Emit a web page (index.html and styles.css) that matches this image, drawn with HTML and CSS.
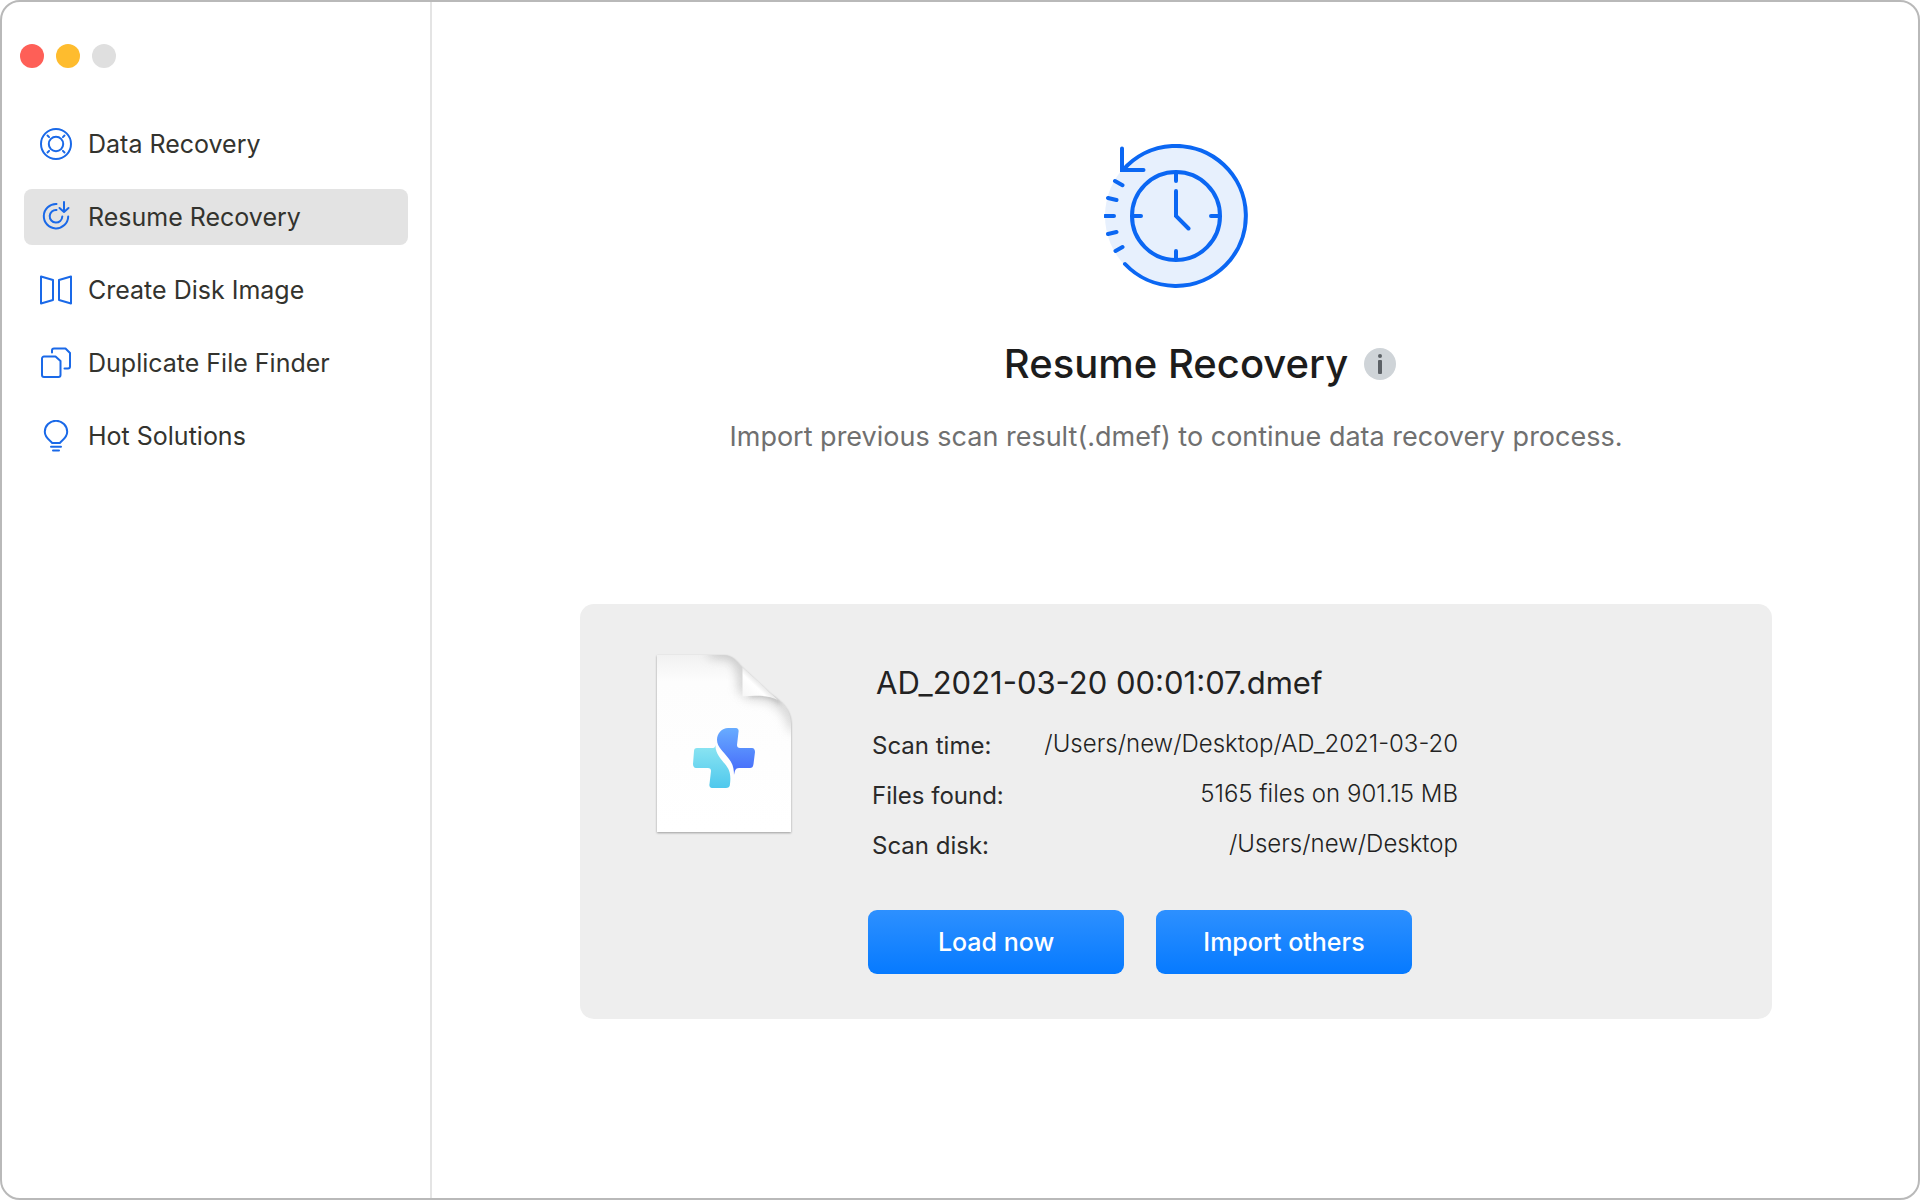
FILE: index.html
```html
<!DOCTYPE html>
<html lang="en">
<head>
<meta charset="utf-8">
<meta name="viewport" content="width=device-width, initial-scale=1">
<title>Resume Recovery</title>
<link rel="stylesheet" href="styles.css">
</head>
<body>
<div class="window">
  <aside class="sidebar">
    <div class="controls">
      <button class="dot dot-close" type="button" aria-label="Close"></button>
      <button class="dot dot-minimize" type="button" aria-label="Minimize"></button>
      <button class="dot dot-zoom" type="button" aria-label="Zoom" disabled></button>
    </div>
    <nav class="nav">
      <a class="nav-item" href="#data">
        <svg class="nav-icon" viewBox="0 0 32 32" aria-hidden="true"><circle cx="16" cy="16" r="15"/><circle cx="16" cy="16" r="7.2"/><path d="M7.500 7.500l1.600 1.600M24.500 7.500l-1.600 1.600M7.500 24.500l1.600-1.600M24.500 24.500l-1.600-1.600"/></svg>
        <span>Data Recovery</span>
      </a>
      <a class="nav-item active" href="#resume" aria-current="page">
        <svg class="nav-icon" viewBox="0 0 32 32" aria-hidden="true"><path d="M16.500 3A12.200 12.200 0 1 0 28.200 15.500"/><path d="M16.500 9A6.300 6.300 0 1 0 22.300 15.500"/><path d="M24 1V10.500M19.500 7l4.500 4 4.500-4"/></svg>
        <span>Resume Recovery</span>
      </a>
      <a class="nav-item" href="#image">
        <svg class="nav-icon" viewBox="0 0 32 32" aria-hidden="true"><path d="M1 2.500L13 6V26L1 29.500ZM31 2.500L19 6V26L31 29.500Z"/></svg>
        <span>Create Disk Image</span>
      </a>
      <a class="nav-item" href="#duplicates">
        <svg class="nav-icon" viewBox="0 0 32 32" aria-hidden="true"><path d="M4 9.500h11.500L20.500 14V28a2 2 0 0 1-2 2H4a2 2 0 0 1-2-2V11.500a2 2 0 0 1 2-2Z"/><path d="M12 5.500V3.500a2 2 0 0 1 2-2H25.500l4.500 4.500V19.500a2 2 0 0 1-2 2H24.500"/></svg>
        <span>Duplicate File Finder</span>
      </a>
      <a class="nav-item" href="#solutions">
        <svg class="nav-icon" viewBox="0 0 32 32" aria-hidden="true"><path d="M12 23C11.500 21 4.800 18.500 4.800 11.800a11.200 11 0 0 1 22.400 0C27.200 18.500 20.500 21 20 23Z"/><path d="M11 26.800H21M13 30.500H19"/></svg>
        <span>Hot Solutions</span>
      </a>
    </nav>
  </aside>
  <main class="main">
    <header class="hero">
      <svg class="hero-icon" viewBox="0 0 144 144" aria-hidden="true">
        <circle class="hero-disc" cx="72" cy="72" r="71"/>
        <path d="M19 26A70 70 0 1 1 21 120"/>
        <path d="M18 4.500V26H39.500"/>
        <circle cx="72" cy="72" r="44"/>
        <path d="M72 30v7M72 107v7M30 72h7M107 72h7M72 47V72L84.500 84.500"/>
        <path d="M11 37l7.500 4.200M4 54l8.500 2M1 72h9M4 90l8.500-2M11.500 107l7-4"/>
      </svg>
      <div class="title-row">
        <h1 class="title">Resume Recovery</h1>
        <button class="info" type="button" aria-label="About this feature">
          <svg class="info-icon" viewBox="0 0 32 32" aria-hidden="true"><circle cx="16" cy="8" r="2"/><rect x="14" y="12" width="4" height="14" rx="1"/></svg>
        </button>
      </div>
      <p class="subtitle">Import previous scan result(.dmef) to continue data recovery process.</p>
    </header>
    <section class="card">
      <svg class="file-icon" viewBox="30 18 148 192" aria-hidden="true">
        <defs>
          <linearGradient id="paper" x1="0" y1="0" x2="0" y2="1"><stop offset="0" stop-color="#f1f1f1"/><stop offset=".15" stop-color="#fdfdfd"/><stop offset="1" stop-color="#fff"/></linearGradient>
          <linearGradient id="flap" gradientUnits="userSpaceOnUse" x1="124" y1="68" x2="140" y2="51"><stop offset="0" stop-color="#f6f6f6"/><stop offset=".7" stop-color="#fff"/><stop offset="1" stop-color="#e2e2e2"/></linearGradient>
          <linearGradient id="cyan" x1="0" y1="0" x2="0" y2="1"><stop offset="0" stop-color="#8ce5f2"/><stop offset="1" stop-color="#4fc8ed"/></linearGradient>
          <linearGradient id="blue" x1="0" y1="0" x2="0" y2="1"><stop offset="0" stop-color="#68acff"/><stop offset="1" stop-color="#4468fa"/></linearGradient>
          <clipPath id="sheet-clip"><path d="M37 25H104C112 25 116 30 121 36L150 63C163 72 171 80 171 94V202H37Z"/></clipPath>
          <filter id="soft" x="-50%" y="-50%" width="200%" height="200%"><feGaussianBlur stdDeviation="6"/></filter>
          <filter id="tight" x="-50%" y="-50%" width="200%" height="200%"><feGaussianBlur stdDeviation="2"/></filter>
        </defs>
        <path class="sheet" fill="url(#paper)" d="M37 25H104C112 25 116 30 121 36L150 63C163 72 171 80 171 94V202H37Z"/>
        <g clip-path="url(#sheet-clip)" fill="none" stroke="#8a8a8a">
          <path filter="url(#soft)" stroke-width="9" opacity=".55" d="M90 22H104C116 22 122 33 124 45V62"/>
          <path filter="url(#soft)" stroke-width="8" opacity=".5" d="M126 64C145 62 156 67 164 76C172 85 174 90 174 100"/>
          <path filter="url(#tight)" stroke-width="3" opacity=".5" d="M130 65C147 64 155 67 160 73"/>
          <path fill="url(#flap)" stroke="none" d="M122.500 37L158 70C148 65 135 65 122.500 66.500Z"/>
        </g>
        <path fill="url(#cyan)" d="M77 118H93C95 118 95 116 95.500 115C95 123 101 129 105 134C110 140 111 145 110 154C110 157 108 158 106 158H92C90 158 89 156 89.500 154L91 141C91 139 90 138 88 138H76C74 138 73 136 73 134L74 121C74 119 75 118 77 118Z"/>
        <path fill="url(#blue)" d="M108 98H116C118 98 119 100 118.500 102L117 115C117 117 118 118 120 118H132C134 118 135 120 135 122L133.500 134C133 137 132 138 130 138H119C115 138 115 141 114 145C114 139 113 134 109 129C104 122 97 117 97 110C97 103 102 98 108 98Z"/>
      </svg>
      <div class="details">
        <h2 class="file-name">AD_2021-03-20 00:01:07.dmef</h2>
        <dl class="facts">
          <div class="fact"><dt>Scan time:</dt><dd>/Users/new/Desktop/AD_2021-03-20</dd></div>
          <div class="fact"><dt>Files found:</dt><dd>5165 files on 901.15 MB</dd></div>
          <div class="fact"><dt>Scan disk:</dt><dd>/Users/new/Desktop</dd></div>
        </dl>
        <div class="actions">
          <button class="action" type="button">Load now</button>
          <button class="action" type="button">Import others</button>
        </div>
      </div>
    </section>
  </main>
</div>
</body>
</html>
```
FILE: styles.css
```css
* {
  box-sizing: border-box;
}

body {
  margin: 0;
  background: #fff;
  font-family: Inter, "Liberation Sans", sans-serif;
}

h1, h2, p, dl, dd {
  margin: 0;
}

button {
  padding: 0;
  border: 0;
  font-family: inherit;
}

.window {
  display: flex;
  min-height: 100vh;
  overflow: hidden;
  border: 2px solid #b9b9b9;
  border-radius: 20px;
  background: #fff;
}

.sidebar {
  flex: 0 0 430px;
  padding: 42px 22px;
  border-right: 2px solid #e4e4e4;
}

.controls {
  display: flex;
  gap: 12px;
  margin-left: -4px;
}

.dot {
  width: 24px;
  height: 24px;
  border-radius: 50%;
}

.dot-close {
  background: #fe5f57;
}

.dot-minimize {
  background: #febc2e;
}

.dot-zoom {
  background: #dfdfdf;
}

.nav {
  display: flex;
  flex-direction: column;
  gap: 17px;
  margin-top: 48px;
}

.nav-item {
  display: flex;
  align-items: center;
  gap: 16px;
  height: 56px;
  padding: 0 16px;
  border-radius: 8px;
  color: #33332e;
  font-size: 25px;
  line-height: 32px;
  text-decoration: none;
}

.nav-item.active {
  background: #e3e3e3;
}

.nav-icon {
  flex: none;
  width: 32px;
  height: 32px;
  fill: none;
  stroke: #1a69e8;
  stroke-width: 2;
  stroke-linecap: round;
  stroke-linejoin: round;
}

.main {
  flex: 1;
  min-width: 0;
  padding: 142px 146px 40px 148px;
}

.hero {
  display: flex;
  flex-direction: column;
  align-items: center;
}

.hero-icon {
  width: 144px;
  height: 144px;
  fill: none;
  stroke: #0b67f3;
  stroke-width: 4;
  stroke-linecap: round;
}

.hero-disc {
  fill: #e7f0fd;
  stroke: none;
}

.title-row {
  display: flex;
  align-items: center;
  gap: 16px;
  margin: 50px 0 0 48px;
}

.title {
  color: #1c1c1c;
  font-size: 40px;
  font-weight: 500;
  line-height: 52px;
}

.info {
  width: 32px;
  height: 32px;
  border-radius: 50%;
  background: #cfd4d8;
}

.info-icon {
  display: block;
  fill: #5c6166;
}

.subtitle {
  margin-top: 31px;
  color: #707070;
  font-size: 27px;
  line-height: 32px;
  text-align: center;
}

.card {
  display: flex;
  gap: 70px;
  margin-top: 151px;
  padding: 44px 70px 45px;
  border-radius: 14px;
  background: #eee;
}

.file-icon {
  flex: none;
  width: 148px;
  height: 192px;
}

.sheet {
  filter: drop-shadow(0 1px 1px rgba(0, 0, 0, .35));
}

.details {
  flex: 0 1 590px;
}

.file-name {
  padding: 15px 8px 0;
  color: #222;
  font-size: 31px;
  font-weight: 400;
  line-height: 40px;
}

.facts {
  padding: 18px 0 0 4px;
}

.fact {
  display: flex;
  align-items: center;
  justify-content: space-between;
  height: 50px;
  color: #2a2a2a;
  font-size: 24px;
  line-height: 32px;
}

.fact dd {
  padding-bottom: 4px;
  color: #222;
  font-weight: 300;
}

.actions {
  display: flex;
  gap: 32px;
  margin-top: 39px;
}

.action {
  width: 256px;
  height: 64px;
  border-radius: 9px;
  background: linear-gradient(#2d90ff, #067aff);
  color: #fff;
  font-size: 25px;
  font-weight: 500;
  line-height: 32px;
}
```
